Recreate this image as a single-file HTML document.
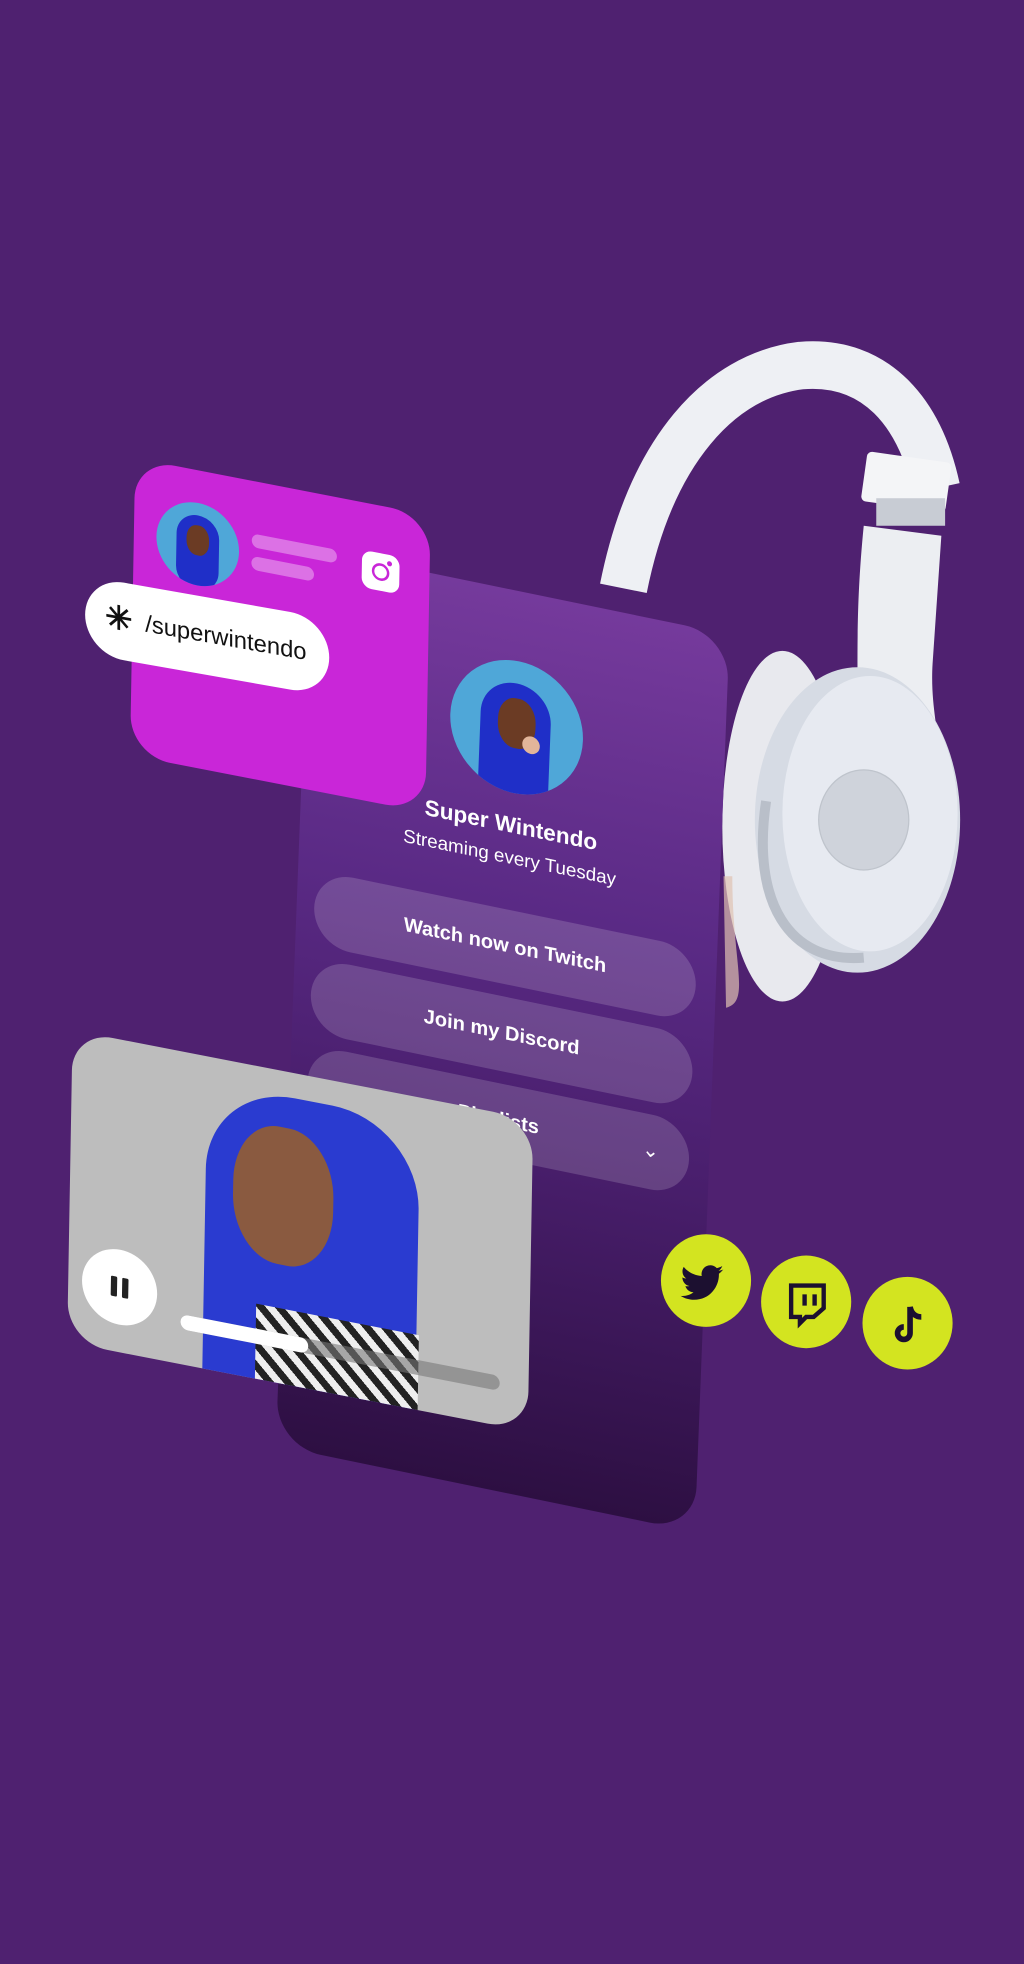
<!DOCTYPE html>
<html><head><meta charset="utf-8"><style>
html,body{margin:0;padding:0;background:#4f2170;}
body{width:1024px;height:1964px;overflow:hidden;position:relative;font-family:"Liberation Sans",sans-serif;}
#s{position:absolute;left:0;top:0;width:818px;height:1568px;transform:scale(1.2518);transform-origin:0 0;}
.abs{position:absolute;}
.phone{left:248px;top:438px;width:335px;height:722px;border-radius:36px;transform-origin:0 0;transform:skewY(9.5deg) rotate(2.2deg);background:linear-gradient(180deg,#753a9c 0%,#5a2a85 35%,#4a1f6e 60%,#2d0f42 100%);}
.btn{position:absolute;left:14px;width:305px;height:60px;border-radius:30px;background:rgba(255,255,255,0.16);color:#fff;font-size:16px;font-weight:bold;text-align:center;line-height:60px;}
.pink{left:108px;top:366px;width:236px;height:238px;border-radius:32px;background:#c926d8;transform-origin:0 0;transform:skewY(10deg) rotate(1deg);}
.pill{left:68px;top:460px;width:195px;height:62px;border-radius:31px;background:#fff;transform-origin:0 0;transform:skewY(10deg);font-size:19px;color:#111;line-height:62px;}
.video{left:58px;top:823px;width:368px;height:250px;border-radius:32px;background:#bdbdbd;overflow:hidden;transform-origin:0 0;transform:skewY(10deg) rotate(1deg);}
.g{width:72px;height:74px;border-radius:50%;background:#d3e420;}
</style></head><body><div id="s">

<svg class="abs" style="left:0;top:0" width="818" height="1568" viewBox="0 0 818 1568">
  <ellipse cx="625" cy="660" rx="48" ry="140" fill="#e8e9ee"/>
  <path d="M585 700 C585 770 600 800 580 805 L578 700 Z" fill="#e0c2b2" opacity="0.7"/>
  <path d="M498 470 C520 360 575 300 640 292 C700 287 735 330 748 390" stroke="#eef0f4" stroke-width="38" fill="none"/>
  <rect x="690" y="365" width="68" height="40" rx="4" fill="#f4f5f7" transform="rotate(8 724 385)"/>
  <rect x="700" y="398" width="55" height="22" fill="#c8ccd4"/>
  <path d="M690 420 L752 428 L745 530 C742 580 760 600 740 640 L680 620 C690 560 680 520 690 420 Z" fill="#eceef2"/>
  <ellipse cx="685" cy="655" rx="82" ry="122" fill="#d6dbe4"/>
  <ellipse cx="695" cy="650" rx="70" ry="110" fill="#e7eaf1"/>
  <ellipse cx="690" cy="655" rx="36" ry="40" fill="#cfd3db" stroke="#bfc4cc"/>
  <path d="M612 640 C600 720 630 770 690 765" stroke="#b9bfc9" stroke-width="8" fill="none"/>
</svg>

<div class="abs phone">
  <div class="abs" style="left:116px;top:56px;width:106px;height:106px;border-radius:50%;background:#4fa7d8;overflow:hidden">
    <div class="abs" style="left:24px;top:18px;width:56px;height:100px;border-radius:28px 28px 10px 10px;background:#1f2fc8"></div>
    <div class="abs" style="left:38px;top:30px;width:30px;height:40px;border-radius:45%;background:#6b3b24"></div>
    <div class="abs" style="left:58px;top:58px;width:14px;height:14px;border-radius:50%;background:#e2b59a"></div>
  </div>
  <div class="abs" style="left:0;width:335px;top:178px;text-align:center;color:#fff;font-weight:bold;font-size:18px">Super Wintendo</div>
  <div class="abs" style="left:0;width:335px;top:206px;text-align:center;color:#fff;font-size:15px">Streaming every Tuesday</div>
  <div class="btn" style="top:256px">Watch now on Twitch</div>
  <div class="btn" style="top:326px">Join my Discord</div>
  <div class="btn" style="top:396px">Playlists<span style="position:absolute;right:24px;font-weight:normal">&#8964;</span></div>
</div>

<div class="abs pink">
  <div class="abs" style="left:18px;top:26px;width:66px;height:66px;border-radius:50%;background:#4fa7d8;overflow:hidden">
    <div class="abs" style="left:16px;top:10px;width:34px;height:60px;border-radius:17px;background:#1f2fc8"></div>
    <div class="abs" style="left:24px;top:18px;width:18px;height:24px;border-radius:45%;background:#6b3b24"></div>
  </div>
  <div class="abs" style="left:94px;top:42px;width:68px;height:11px;border-radius:6px;background:rgba(255,255,255,0.35)"></div>
  <div class="abs" style="left:94px;top:60px;width:50px;height:11px;border-radius:6px;background:rgba(255,255,255,0.35)"></div>
  <div class="abs" style="left:182px;top:38px;width:30px;height:30px;border-radius:8px;background:#fff">
    <div class="abs" style="left:8px;top:8px;width:10px;height:10px;border:2.5px solid #c926d8;border-radius:50%"></div>
    <div class="abs" style="left:20px;top:5px;width:4px;height:4px;border-radius:50%;background:#c926d8"></div>
  </div>
</div>

<div class="abs pill"><span style="position:absolute;left:16px;top:-2px;font-size:26px;font-weight:bold">&#10035;</span><span style="position:absolute;left:48px">/superwintendo</span></div>

<div class="abs video">
  <div class="abs" style="left:108px;top:20px;width:170px;height:260px;border-radius:70px 70px 20px 20px;background:#2a3bd0"></div>
  <div class="abs" style="left:130px;top:45px;width:80px;height:110px;border-radius:45%;background:#8a5a40"></div>
  <div class="abs" style="left:150px;top:190px;width:130px;height:70px;background:repeating-linear-gradient(45deg,#222 0 6px,#eee 6px 12px)"></div>
  <div class="abs" style="left:90px;top:210px;width:255px;height:12px;border-radius:6px;background:rgba(120,120,120,0.6)"></div>
  <div class="abs" style="left:90px;top:210px;width:102px;height:12px;border-radius:6px;background:#fff"></div>
  <div class="abs" style="left:11px;top:168px;width:60px;height:60px;border-radius:50%;background:#fff">
    <div class="abs" style="left:23px;top:22px;width:5px;height:16px;background:#222;border-radius:1px"></div>
    <div class="abs" style="left:32px;top:22px;width:5px;height:16px;background:#222;border-radius:1px"></div>
  </div>
</div>

<div class="abs g" style="left:528px;top:986px"><svg width="72" height="74" viewBox="0 0 72 74"><path d="M50 28c-1.3.6-2.600 1-4 1.100 1.400-.9 2.500-2.200 3-3.800-1.400.8-2.800 1.400-4.400 1.700a7 7 0 0 0-12 6.300c-5.800-.3-11-3.100-14.400-7.300-.6 1-1 2.200-1 3.500 0 2.400 1.200 4.600 3.100 5.800-1.100 0-2.200-.3-3.200-.9 0 3.400 2.400 6.300 5.600 6.900-1 .3-2.100.3-3.200.1.9 2.800 3.500 4.800 6.500 4.900-2.800 2.200-6.400 3.300-10.300 2.900 3.100 2 6.800 3.100 10.700 3.100 12.900 0 19.900-10.700 19.900-19.900v-.9c1.400-1 2.600-2.200 3.600-3.600z" fill="#1c1030"/></svg></div>
<div class="abs g" style="left:608px;top:1003px"><svg width="72" height="74" viewBox="0 0 72 74"><path d="M24 24h26v18l-8 7h-6l-5 5v-5h-7z" fill="none" stroke="#1c1030" stroke-width="3.5"/><rect x="33" y="31" width="3.5" height="9" fill="#1c1030"/><rect x="41" y="31" width="3.5" height="9" fill="#1c1030"/></svg></div>
<div class="abs g" style="left:689px;top:1020px"><svg width="72" height="74" viewBox="0 0 72 74"><path d="M38 24v21a5 5 0 1 1-5-5" fill="none" stroke="#1c1030" stroke-width="4.5"/><path d="M38 24c1 5 4 8 9 8" fill="none" stroke="#1c1030" stroke-width="4.5"/></svg></div>

</div></body></html>
